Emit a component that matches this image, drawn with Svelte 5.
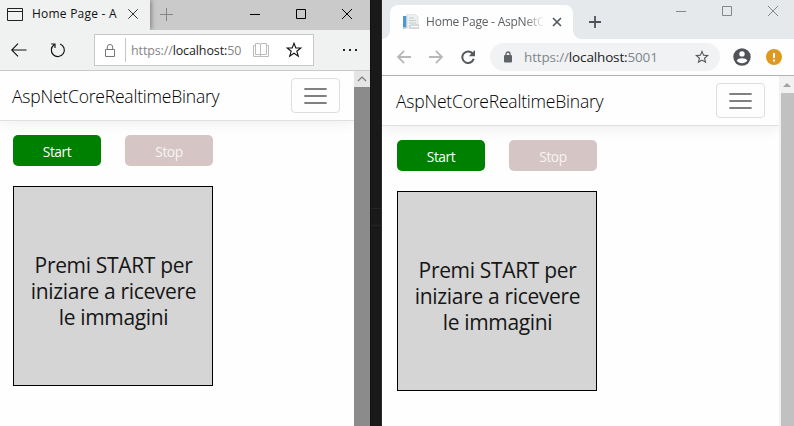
<script>
  const lines = ['Premi START per', 'iniziare a ricevere', 'le immagini'];
</script>

{#snippet page()}
  <section class="page">
    <header class="nav">
      <span class="brand">AspNetCoreRealtimeBinary</span>
      <button class="toggler" aria-label="Menu">
        <svg width="23" height="18" viewBox="0 0 23 18"><path d="M1 2H22M1 9H22M1 16H22" stroke="#808080" stroke-width="1.8" stroke-linecap="round" /></svg>
      </button>
    </header>
    <main>
      <div class="buttons">
        <button class="btn start">Start</button>
        <button class="btn stop">Stop</button>
      </div>
      <div class="picture">
        {#each lines as line}<span>{line}</span>{/each}
      </div>
    </main>
  </section>
{/snippet}

<div class="desktop">
  <div class="edge">
    <div class="e-top">
      <div class="e-tab">
        <svg width="16" height="13" viewBox="0 0 16 13" fill="none" stroke="#222"><path d="M.5 .5H15.5V12.5H.5ZM.5 3.5H15.5" /></svg>
        <span class="e-title">Home Page - A</span>
        <svg width="10" height="10" viewBox="0 0 10 10" stroke="#333"><path d="M.3 .3L9.7 9.7M9.7 .3L.3 9.7" /></svg>
      </div>
      <svg class="e-plus" width="13" height="13" viewBox="0 0 13 13" stroke="#858585"><path d="M6.5 0V13M0 6.5H13" /></svg>
      <div class="controls">
        <svg width="10" height="10" viewBox="0 0 10 10"><path d="M0 5.5H10" stroke="#000" /></svg>
        <svg width="10" height="10" viewBox="0 0 10 10"><path d="M.5 .5H9.5V9.5H.5Z" fill="none" stroke="#000" /></svg>
        <svg width="10" height="10" viewBox="0 0 10 10"><path d="M0 0L10 10M10 0L0 10" stroke="#000" /></svg>
      </div>
    </div>
    <div class="e-bar">
      <svg width="16" height="14" viewBox="0 0 16 14" fill="none" stroke="#111" stroke-width="1.1"><path d="M15.5 7H.8M7 .7L.7 7L7 13.3" /></svg>
      <svg class="e-reload" width="16" height="16" viewBox="0 0 16 16" fill="none" stroke="#111" stroke-width="1.15"><path d="M10.1 2A6.5 6.5 0 1 1 4.2 2.7M1.2 2H5V6" /></svg>
      <div class="e-field">
        <svg width="10" height="13" viewBox="0 0 10 13" fill="none" stroke="#777"><path d="M.5 5.5H9.5V12.5H.5ZM2.3 5.5V3A2.7 2.5 0 0 1 7.7 3V5.5" /></svg>
        <i class="divider"></i>
        <span class="e-url">https://<b>localhost:</b>50</span>
        <svg class="book" width="16" height="14" viewBox="0 0 16 14" fill="none" stroke="#bcbcbc"><path d="M2.5 .5H6Q7.5 .5 7.5 2V12.5Q7.5 11.5 6 11.5H2.5ZM7.5 2Q7.5 .5 9 .5H13.5V11.5H9Q7.5 11.5 7.5 12.5M2.5 2.5H.5V13.5H15.5V2.5H13.5" /></svg>
        <svg width="16" height="16" viewBox="0 0 16 16" fill="none" stroke="#111" stroke-width="1.1"><path d="M8 1.3L9.8 6H14.8L10.8 9.2L12.3 14.2L8 11.2L3.7 14.2L5.2 9.2L1.2 6H6.2Z" /></svg>
      </div>
      <svg class="dots" width="14" height="2" viewBox="0 0 14 2"><path d="M0 0H2V2H0ZM6 0H8V2H6ZM12 0H14V2H12Z" fill="#222" /></svg>
    </div>
    <div class="view">
      {@render page()}
      <div class="e-scroll"><svg width="10" height="6" viewBox="0 0 10 6" fill="none" stroke="#777" stroke-width="1.1"><path d="M1 5L5 1L9 5" /></svg></div>
    </div>
  </div>

  <div class="gap"><i></i></div>

  <div class="chrome">
    <div class="c-top">
      <div class="c-tab">
        <svg width="17" height="16" viewBox="0 0 17 16">
          <path d="M4 0H12L15 3V14H4Z" fill="#edf0f1" stroke="#d2d7d9" stroke-width=".7" />
          <path d="M6 4H11M6 6.5H13M6 9H13M6 11.5H13" stroke="#c4cccf" />
          <path d="M0 2H3V13.5H0Z" fill="#4b98d3" /><path d="M3.5 2V14L0 14.8" stroke="#c2cbd1" fill="none" />
          <path d="M8 10H16V15H6V12H8Z" fill="#d4d9db" /><path d="M8 12.5H15" stroke="#fff" />
        </svg>
        <span class="c-title">Home Page - AspNetC</span>
        <svg width="10" height="10" viewBox="0 0 10 10"><path d="M1 1L9 9M9 1L1 9" stroke="#50565a" stroke-width="1.6" /></svg>
      </div>
      <svg class="c-plus" width="12" height="12" viewBox="0 0 12 12"><path d="M6 0V12M0 6H12" stroke="#505357" stroke-width="1.8" /></svg>
      <div class="controls">
        <svg width="10" height="10" viewBox="0 0 10 10"><path d="M0 5.5H10" stroke="#858789" /></svg>
        <svg width="10" height="10" viewBox="0 0 10 10"><path d="M.5 .5H9.5V9.5H.5Z" fill="none" stroke="#858789" /></svg>
        <svg width="10" height="10" viewBox="0 0 10 10"><path d="M0 0L10 10M10 0L0 10" stroke="#858789" /></svg>
      </div>
    </div>
    <div class="c-bar">
      <svg width="14" height="14" viewBox="0 0 14 14" fill="none" stroke="#b7b8ba" stroke-width="1.8"><path d="M14 7H1.5M7.2 .8L1 7L7.2 13.2" /></svg>
      <svg class="fwd" width="14" height="14" viewBox="0 0 14 14" fill="none" stroke="#b7b8ba" stroke-width="1.8"><path d="M0 7H12.5M6.8 .8L13 7L6.8 13.2" /></svg>
      <svg class="fwd" width="14" height="14" viewBox="0 0 14 14"><path d="M11.6 3.5A5.8 5.8 0 1 0 12.7 8.8" fill="none" stroke="#55585c" stroke-width="2" /><path d="M14 0V6.2H7.8Z" fill="#55585c" /></svg>
      <div class="pill">
        <svg width="8" height="12" viewBox="0 0 8 12"><path d="M2 5V3.2A2 2.2 0 0 1 6 3.2V5" fill="none" stroke="#5f6368" stroke-width="1.3" /><rect y="4" width="8" height="7.5" rx="1" fill="#5f6368" /></svg>
        <span class="c-url">https://<b>localhost:</b>5001</span>
        <svg class="c-star" width="14" height="14" viewBox="2 2 20 20"><path fill="#55585c" d="M22 9.24l-7.19-.62L12 2 9.19 8.63 2 9.24l5.46 4.73L5.82 21 12 17.27 18.18 21l-1.63-7.03L22 9.24zM12 15.4l-3.76 2.27 1-4.28-3.32-2.88 4.38-.38L12 6.1l1.71 4.04 4.38.38-3.32 2.88 1 4.28L12 15.4z" /></svg>
      </div>
      <svg class="account" width="18" height="18" viewBox="0 0 18 18"><circle cx="9" cy="9" r="8.7" fill="#505458" /><circle cx="9" cy="5.9" r="2.7" fill="#fff" /><path d="M3.7 12.7C4.5 9.4 13.5 9.4 14.3 12.7C11.7 16 6.3 16 3.7 12.7Z" fill="#fff" /></svg>
      <svg class="warning" width="16" height="16" viewBox="0 0 16 16"><circle cx="8" cy="8" r="8" fill="#df9820" /><path d="M7 4H9V9H7ZM7 10.5H9V12.5H7Z" fill="#fff" /></svg>
    </div>
    <div class="view">
      {@render page()}
      <div class="c-scroll"><svg width="8" height="4" viewBox="0 0 8 4"><path d="M0 4L4 0L8 4Z" fill="#a1a1a1" /></svg><i></i></div>
    </div>
  </div>
</div>

<style>
  :global(body) { margin: 0; overflow: hidden; }
  .desktop { display: flex; width: 794px; height: 426px; overflow: hidden; font-family: "Open Sans", "Noto Sans", sans-serif; }
  .desktop :is(div, span, button, header, main, section) { box-sizing: border-box; }
  svg { display: block; flex: none; }
  span { white-space: nowrap; }
  b { font-weight: 400; color: #222; }
  .edge { width: 370px; flex: none; display: flex; flex-direction: column; }
  .e-top { height: 30px; display: flex; background: #cacaca; }
  .e-tab { width: 150px; background: #f0f2f1; display: flex; align-items: center; padding: 0 12px 2px 7px; box-shadow: 1px 0 5px #777; }
  .e-title { width: 87px; margin: 0 9px 0 9px; font-size: 12px; line-height: 20px; letter-spacing: .22px; color: #111; }
  .e-plus { margin: 8px 0 0 10px; }
  .controls { display: flex; gap: 36px; margin-left: auto; }
  .e-top .controls { padding: 9px 18px 0 0; }
  .e-bar { position: relative; height: 41px; background: #f0f2f1; border-bottom: 1px solid #c8c9c9; display: flex; align-items: center; padding-left: 11px; }
  .e-reload { margin-left: 23px; }
  .e-field { width: 220px; height: 32px; margin-left: 28px; border: 1px solid #c8c8c8; background: #fff; display: flex; align-items: center; padding-left: 10px; }
  .divider { width: 1px; height: 24px; background: #c8c8c8; margin: 0 5px 0 10px; }
  .e-url { width: 110px; font-size: 12.5px; letter-spacing: -.12px; color: #858585; }
  .book { margin: 0 17px 0 12px; }
  .dots { margin-left: 29px; }
  .view { flex: 1; display: flex; min-height: 0; background: #fefefe; }
  .page { flex: 1; min-width: 0; }
  .e-scroll { position: relative; width: 16px; background: linear-gradient(#e5e5e5 16px, #8b8b8b 16px); padding: 5px 0 0 3px; }
  .gap { position: relative; width: 12px; flex: none; background: #191919; border-left: 1px solid #111; border-right: 1px solid #292929; padding-top: 208px; }
  .gap i { display: block; height: 18px; border: solid #252525; border-width: 1px 0; box-sizing: border-box; }
  .chrome { flex: 1; display: flex; flex-direction: column; }
  .c-top { height: 39px; display: flex; background: #e6e9ec; padding-left: 8px; }
  .c-tab { position: relative; width: 183px; height: 34px; margin-top: 5px; border-radius: 8px 8px 0 0; background: #fefefe; display: flex; align-items: center; padding-left: 13px; }
  .c-tab::before, .c-tab::after { content: ""; position: absolute; bottom: 0; width: 8px; height: 8px; }
  .c-tab::before { left: -8px; background: radial-gradient(circle at 0 0, #e6e9ec 7.5px, #fefefe 8px); }
  .c-tab::after { right: -8px; background: radial-gradient(circle at 100% 0, #e6e9ec 7.5px, #fefefe 8px); }
  .c-title { width: 118px; margin: 0 8px 0 6px; font-size: 12px; letter-spacing: -.22px; line-height: 18px; color: #5d6164; mask-image: linear-gradient(90deg, #000 84%, transparent); }
  .c-plus { margin: 16px 0 0 16px; }
  .c-top .controls { padding: 6px 16px 0 0; }
  .c-bar { height: 37px; background: #fefefe; border-bottom: 1px solid #b3b3b3; display: flex; align-items: center; padding-left: 15px; }
  .fwd { margin-left: 18px; }
  .pill { width: 230px; height: 28px; border-radius: 14px; background: #f0f2f4; margin-left: 15px; display: flex; align-items: center; padding: 0 11px 0 14px; }
  .c-url { margin-left: 12px; font-size: 13.5px; letter-spacing: -.15px; color: #80868b; }
  .c-star { margin-left: auto; }
  .account { margin-left: 13px; }
  .warning { margin-left: 15px; }
  .c-scroll { position: relative; width: 15px; background: #f1f1f1; display: flex; flex-direction: column; align-items: center; padding-top: 7px; }
  .c-scroll i { width: 13px; flex: 1; background: #c1c1c1; margin: 6px 0 0 2px; }
  .nav { height: 50px; border-bottom: 1px solid #dee0e4; box-shadow: 0 4px 12px rgba(0,0,0,.055); display: flex; align-items: center; justify-content: space-between; padding: 0 14px 0 12px; }
  .brand { font-size: 17.5px; font-weight: 300; letter-spacing: -.2px; line-height: 24px; color: #000; padding-top: 1px; }
  .toggler { width: 49px; height: 35px; border: 1px solid #dedede; border-radius: 4px; background: transparent; padding: 0; display: flex; align-items: center; justify-content: center; }
  .chrome .nav { padding-left: 14px; }
  main { padding: 14px 0 0 13px; }
  .chrome main { padding-left: 15px; }
  .buttons { display: flex; gap: 24px; }
  .btn { width: 88px; height: 31px; border: 0; border-radius: 5px; padding: 2px 0 0; color: #fff; font: 13.8px "Open Sans", sans-serif; letter-spacing: -.45px; }
  .start { background: #008000; }
  .stop { background: #d6c5c5; color: #f8f4f4; }
  .chrome .stop { font-weight: 500; }
  .picture { width: 200px; height: 200px; margin-top: 20px; border: 1px solid #000; background: #d5d5d5; color: #161616; display: flex; flex-direction: column; align-items: center; padding: 65px 0 0 1px; font-size: 21px; letter-spacing: -.33px; line-height: 26px; }
</style>
